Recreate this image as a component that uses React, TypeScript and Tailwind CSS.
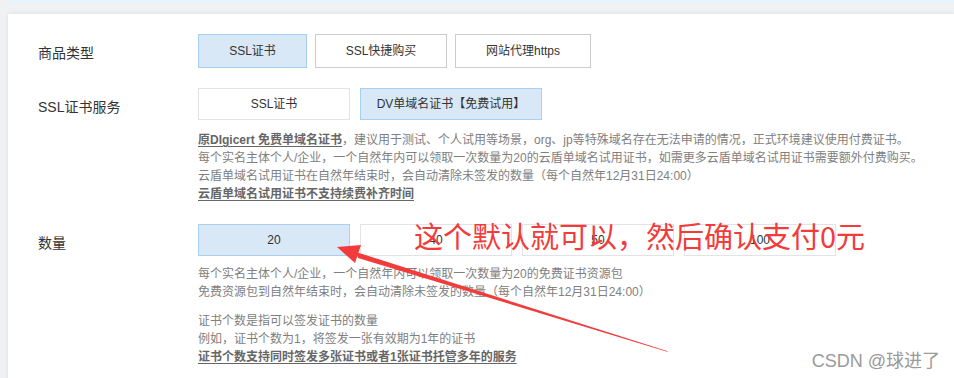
const font = "font-['Liberation_Sans','Noto_Sans_CJK_SC',sans-serif]";

const Opt = ({ label, w, h, active, light }: { label: string; w: string; h: string; active?: boolean; light?: boolean }) => (
  <div
    className={`${w} ${h} flex items-center justify-center text-[12px] text-[#333] border ${
      active ? "bg-[#d8e8f6] border-[#a9cfee]" : light ? "bg-white border-[#e3e3e3]" : "bg-white border-[#cccccc]"
    }`}
  >
    {label}
  </div>
);

const Label = ({ text }: { text: string }) => (
  <div className="w-[160px] shrink-0 pt-[9px] text-[14px] leading-[20px] text-[#333]">{text}</div>
);

const Strong = ({ children }: { children: React.ReactNode }) => (
  <span className="font-bold text-[#666] underline underline-offset-2">{children}</span>
);

export default function App() {
  return (
    <div className={`relative w-[954px] h-[378px] overflow-hidden bg-[#f0f1f3] ${font}`}>
      <div className="ml-[8px] h-[3px] bg-[#e6f3fc]" />
      <div className="ml-[8px] mt-[11px] h-[400px] bg-white shadow-[0_-1px_4px_rgba(0,0,0,0.07)] pt-[20px] pl-[30px]">
        {/* 商品类型 */}
        <div className="flex">
          <Label text="商品类型" />
          <div className="flex gap-[8px]">
            <Opt label="SSL证书" w="w-[109px]" h="h-[34px]" active />
            <Opt label="SSL快捷购买" w="w-[132px]" h="h-[34px]" />
            <Opt label="网站代理https" w="w-[136px]" h="h-[34px]" />
          </div>
        </div>

        {/* SSL证书服务 */}
        <div className="flex mt-[20px]">
          <Label text="SSL证书服务" />
          <div className="flex flex-col">
            <div className="flex gap-[10px]">
              <Opt label="SSL证书" w="w-[152px]" h="h-[32px]" light />
              <Opt label="DV单域名证书【免费试用】" w="w-[182px]" h="h-[32px]" active />
            </div>
            <div className="mt-[11px] text-[12px] leading-[18px] text-[#808080] whitespace-nowrap">
              <p>
                <Strong>原DIgicert 免费单域名证书</Strong>，建议用于测试、个人试用等场景，org、jp等特殊域名存在无法申请的情况，正式环境建议使用付费证书。
              </p>
              <p>每个实名主体个人/企业，一个自然年内可以领取一次数量为20的云盾单域名试用证书，如需更多云盾单域名试用证书需要额外付费购买。</p>
              <p>云盾单域名试用证书在自然年结束时，会自动清除未签发的数量（每个自然年12月31日24:00）</p>
              <p>
                <Strong>云盾单域名试用证书不支持续费补齐时间</Strong>
              </p>
            </div>
          </div>
        </div>

        {/* 数量 */}
        <div className="flex mt-[21px]">
          <Label text="数量" />
          <div className="flex flex-col">
            <div className="flex gap-[10px]">
              <Opt label="20" w="w-[152px]" h="h-[32px]" active />
              <Opt label="40" w="w-[152px]" h="h-[32px]" light />
              <Opt label="50" w="w-[152px]" h="h-[32px]" light />
              <Opt label="100" w="w-[152px]" h="h-[32px]" light />
            </div>
            <div className="mt-[9px] text-[12px] leading-[18px] text-[#808080] whitespace-nowrap">
              <p>每个实名主体个人/企业，一个自然年内可以领取一次数量为20的免费证书资源包</p>
              <p>免费资源包到自然年结束时，会自动清除未签发的数量（每个自然年12月31日24:00）</p>
              <p className="mt-[11px]">证书个数是指可以签发证书的数量</p>
              <p>例如，证书个数为1，将签发一张有效期为1年的证书</p>
              <p>
                <Strong>证书个数支持同时签发多张证书或者1张证书托管多年的服务</Strong>
              </p>
            </div>
          </div>
        </div>
      </div>

      {/* annotation */}
      <div className="absolute left-[414px] top-[218px] text-[29px] leading-[34px] text-[#f23b3b] whitespace-nowrap font-['Noto_Sans_CJK_SC',sans-serif]">
        这个默认就可以，然后确认支付0元
      </div>
      <svg className="absolute left-0 top-0" width="954" height="378" viewBox="0 0 954 378">
        <polygon points="337,247 361,245 355,263" fill="#f23b3b" />
        <polygon points="356,252 358,258 668,352 667,351" fill="#f23b3b" />
      </svg>

      <div className="absolute right-[14px] bottom-[6px] text-[18px] leading-[22px] text-[#9a9a9a] [text-shadow:0_0_2px_#fff]">
        CSDN @球进了
      </div>
    </div>
  );
}
